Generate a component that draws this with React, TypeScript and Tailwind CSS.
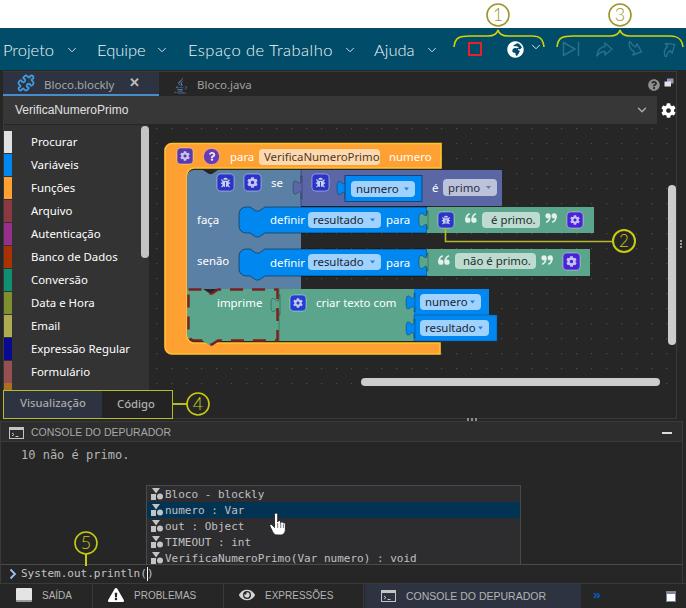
import React from "react";
import { FaBug, FaCog, FaGlobeAfrica, FaEye, FaExclamationTriangle, FaJava, FaQuestionCircle, FaQuestion } from "react-icons/fa";
import { ChevronDown, Puzzle } from "lucide-react";

const cats: [string, string][] = [
  ["Procurar", "#e0e0e0"], ["Variáveis", "#0088f0"], ["Funções", "#ffa033"], ["Arquivo", "#8a3a40"],
  ["Autenticação", "#96308c"], ["Banco de Dados", "#a83200"], ["Conversão", "#109070"], ["Data e Hora", "#7f8f30"],
  ["Email", "#b0aa50"], ["Expressão Regular", "#0a0a90"], ["Formulário", "#965050"],
];

const FS = "11.4";

const tab = (x: number, y: number, h: number, color: string) => (
  <path d={`M${x + 1} ${y + 1} h-1 v${(h - 15) / 2 - 1} c0 10 -8 -8 -8 7.5 s8 -2.5 8 7.5 v${(h - 15) / 2 - 1} h1 z`} fill={color} stroke="#00000066" strokeWidth="0.7" />
);

const Ico = ({ x, y, kind, bg = "#2a35c8", s = 17 }: { x: number; y: number; kind: "bug" | "gear"; bg?: string; s?: number }) => (
  <g>
    <rect x={x} y={y} width={s} height={s} rx="3.5" fill={bg} stroke="#ffffff66" strokeWidth="1" />
    {kind === "bug" && <FaBug x={x + 3.5} y={y + 3.5} size={s - 7} color="#c7d2ee" />}
    {kind === "gear" && <FaCog x={x + 3} y={y + 3} size={s - 6} color="#c9c3f3" />}
  </g>
);

const Field = ({ x, y, w, h = 16, bg, label, arrow, fill = "#1c2530", tx }: { x: number; y: number; w: number; h?: number; bg: string; label: string; arrow?: string; fill?: string; tx?: number }) => (
  <g>
    <rect x={x} y={y} width={w} height={h} rx="4" fill={bg} />
    <text x={tx ?? x + 5} y={y + h / 2 + 4} fontSize={FS} fill={fill}>{label}</text>
    {arrow && <path d={`M${x + w - 11} ${y + h / 2 - 1.5} h5 l-2.5 3 z`} fill={arrow} />}
  </g>
);

const T = ({ x, y, children }: { x: number; y: number; children: React.ReactNode }) => (
  <text x={x} y={y} fontSize={FS} fill="#fff">{children}</text>
);

const Quote = ({ x, y, close }: { x: number; y: number; close?: boolean }) => (
  <g transform={close ? `translate(${x + 12} ${y + 10}) rotate(180)` : `translate(${x} ${y})`} fill="#e4f0ec" stroke="#e4f0ec">
    <circle cx="2.8" cy="7.2" r="2.6" stroke="none" />
    <path d="M0.9 7 C0.9 4 2.4 1.6 4.8 0.8" fill="none" strokeWidth="1.6" />
    <circle cx="9" cy="7.2" r="2.6" stroke="none" />
    <path d="M7.1 7 C7.1 4 8.6 1.6 11 0.8" fill="none" strokeWidth="1.6" />
  </g>
);

const Definir = ({ y, h }: { y: number; h: number }) => (
  <g>
    <path d={`M246 ${y} h4 l6 4 h3 l6 -4 H427 V${y + h} H265 l-6 4 h-3 l-6 -4 h-4 a7 7 0 0 1 -7 -7 V${y + 7} a7 7 0 0 1 7 -7 z`} fill="#0088f0" stroke="#00000070" strokeWidth="1" />
    <T x={270} y={y + h / 2 + 4}>definir</T>
    <Field x={308} y={y + 5} w={73} bg="#9fd2ff" label="resultado" arrow="#2a7fd0" />
    <T x={386} y={y + h / 2 + 4}>para</T>
  </g>
);

const Canvas = () => (
  <svg className="absolute left-0 top-0" width="686" height="608" viewBox="0 0 686 608">
    <defs>
      <pattern id="dots" width="15" height="15" patternUnits="userSpaceOnUse" x="6" y="8">
        <rect width="1.2" height="1.2" fill="#4d4d4d" />
      </pattern>
    </defs>
    <rect x="149" y="125" width="527" height="265" fill="url(#dots)" />

    {/* orange function block */}
    <path d="M172 143.5 H441 V168 H194 a7 7 0 0 0 -7 7 V336 a7 7 0 0 0 7 7 H440 V354 H172 a7 7 0 0 1 -7 -7 V150.5 a7 7 0 0 1 7 -7 z" fill="#ffa033" stroke="#ffc42e" strokeWidth="1.6" />
    <Ico x={177} y={148} kind="gear" bg="#5c3aa8" s={16} />
    <circle cx="211.5" cy="156.5" r="8" fill="#6a3bb0" stroke="#ffffff55" />
    <FaQuestion x={207.5} y={152} size={9} color="#e8e0ff" />
    <T x={230} y={161}>para</T>
    <Field x={259} y={149} w={121} bg="#ffd9ad" label="VerificaNumeroPrimo" fill="#4a3a28" tx={264} />
    <T x={389} y={161}>numero</T>

    {/* if block */}
    <path d="M194 170 H203 l6 4 h3 l6 -4 H301 V289 H187 V177 a7 7 0 0 1 7 -7 z" fill="#5b80a5" />
    <rect x="301" y="170" width="201" height="36" fill="#5b67a5" />
    <path d="M301 170 V206" stroke="#3f4a80" strokeWidth="1" />
    <Ico x={217} y={174} kind="bug" />
    <Ico x={244} y={174} kind="gear" />
    <T x={271} y={187}>se</T>
    {tab(301, 175, 25, "#5b67a5")}
    <Ico x={312} y={174} kind="bug" />
    {tab(345, 176, 24, "#0088f0")}
    <rect x="345" y="175.5" width="77" height="26" fill="#0088f0" stroke="#14457a" strokeWidth="1" />
    <Field x={351} y={181} w={64} bg="#9fd2ff" label="numero" arrow="#2a7fd0" tx={356} />
    <text x={432} y={192} fontSize={FS} fill="#fff">é</text>
    <Field x={443} y={179} w={54} h={17} bg="#bdc2db" label="primo" arrow="#6c75a8" fill="#2a2e44" tx={448} />

    <T x={197} y={224}>faça</T>
    <Definir y={207} h={26} />
    <rect x="427" y="207" width="167" height="26" fill="#5ba58c" />
    {tab(427, 210, 20, "#5ba58c")}
    <Ico x={438} y={212} kind="bug" s={16} />
    <Quote x={465} y={213} />
    <Field x={482} y={212} w={58} bg="#bddbd0" label="é primo." fill="#22302b" tx={491} />
    <Quote x={545} y={213} close />
    <Ico x={567} y={212} kind="gear" bg="#4a22d8" s={16} />

    <T x={197} y={265}>senão</T>
    <Definir y={249} h={27} />
    <rect x="427" y="249" width="163" height="27" fill="#5ba58c" />
    {tab(427, 252, 20, "#5ba58c")}
    <Quote x={438} y={255} />
    <Field x={455} y={253} w={81} bg="#bddbd0" label="não é primo." fill="#22302b" tx={463} />
    <Quote x={541} y={255} close />
    <Ico x={563} y={253} kind="gear" bg="#4a22d8" s={17} />

    {/* print block */}
    <path d="M187 289 H203 l6 4 h3 l6 -4 H279 V341 H218 l-6 4 h-3 l-6 -4 H194 a7 7 0 0 1 -7 -7 z" fill="#5ba58c" />
    <rect x="279" y="289" width="135" height="52" fill="#5ba58c" />
    <path d="M279 289 V341" stroke="#3d7a66" strokeWidth="1" />
    <T x={217} y={307}>imprime</T>
    {tab(279, 294, 22, "#5ba58c")}
    <path d="M188.5 289.5 H203 l6 4 h3 l6 -4 H277.5 V340.5 H218 l-6 4 h-3 l-6 -4 H194 a6 6 0 0 1 -5.5 -6 z" fill="none" stroke="#7a2020" strokeWidth="2.4" strokeDasharray="13 9" />
    <Ico x={290} y={295} kind="gear" bg="#2040d0" s={16} />
    <T x={316} y={307}>criar texto com</T>
    <rect x="414" y="289" width="75" height="26" fill="#0088f0" />
    <rect x="414" y="315" width="83" height="26" fill="#0088f0" stroke="#14457a" strokeWidth="0.5" />
    {tab(414, 292, 21, "#0088f0")}
    {tab(414, 318, 21, "#0088f0")}
    <Field x={420} y={294} w={61} bg="#9fd2ff" label="numero" arrow="#2a7fd0" tx={425} />
    <Field x={420} y={320} w={69} bg="#9fd2ff" label="resultado" arrow="#2a7fd0" tx={425} />

    {/* annotation 2 */}
    <path d="M445.5 228 V241.5 H613" fill="none" stroke="#b6bb2a" strokeWidth="1.6" />
    <circle cx="624" cy="241" r="11" fill="#262626" stroke="#c8cc10" strokeWidth="2" />
    <text x="624" y="247" fontSize="17" fill="#c8cc10" textAnchor="middle" fontWeight="300" className="font-[Lato]">2</text>
  </svg>
);

const Annot = ({ n, cx, cy, color, bg }: { n: string; cx: number; cy: number; color: string; bg: string }) => (
  <svg className="absolute left-0 top-0" width="686" height="608" viewBox="0 0 686 608">
    <circle cx={cx} cy={cy} r="11" fill={bg} stroke={color} strokeWidth="1.6" />
    <text x={cx} y={cy + 6} fontSize="18" fill={color} textAnchor="middle" fontWeight="300" className="font-[Lato]">{n}</text>
  </svg>
);

const Arrow = ({ x, y, t }: { x: number; y: number; t: string }) => (
  <svg className="absolute" style={{ left: x, top: y }} width="18" height="16" viewBox="0 0 18 16">
    <path transform={t} d="M10 2 L17 8 L10 14 V10.5 C6 10.5 4 12 2 15 C2.5 9 6 6 10 5.5 Z" fill="none" stroke="#2b6f8c" strokeWidth="1.4" strokeLinejoin="round" />
  </svg>
);

const ClassIco = () => (
  <svg width="14" height="14" viewBox="0 0 14 14" className="shrink-0">
    <path d="M2 1 H10 L6 6.5 Z" fill="#c4c4c4" />
    <rect x="1" y="7" width="5" height="6" fill="#c4c4c4" />
    <circle cx="10" cy="9.5" r="3" fill="#c4c4c4" />
  </svg>
);

const NavItem = ({ x, chev, wide, children }: { x: number; chev: number; wide?: boolean; children: React.ReactNode }) => (
  <>
    <span className={`absolute top-[10px] whitespace-nowrap font-[Lato] text-[16.5px] font-light leading-[24px] text-[#f0f8fa] ${wide ? "tracking-[0.45px]" : ""}`} style={{ left: x }}>{children}</span>
    <ChevronDown className="absolute top-[15px] text-[#dcebf0]" style={{ left: chev - 7 }} size={14} strokeWidth={1.6} />
  </>
);

const Bottom = ({ x, big, children }: { x: number; big?: boolean; children: React.ReactNode }) => (
  <span className={`absolute top-[6px] whitespace-nowrap font-[Liberation_Sans] leading-[12px] text-[#b4b4b4] ${big ? "text-[10.5px]" : "text-[10px]"}`} style={{ left: x }}>{children}</span>
);

const ConsoleIco = ({ x, y }: { x: number; y: number }) => (
  <svg className="absolute" style={{ left: x, top: y }} width="15" height="12" viewBox="0 0 15 12">
    <rect x="0.5" y="0.5" width="14" height="11" fill="none" stroke="#c4c4c4" />
    <rect x="0.5" y="0.5" width="14" height="2.5" fill="#c4c4c4" />
    <path d="M3 6 l2 1.5 -2 1.5 M6.5 9.5 h3" fill="none" stroke="#c4c4c4" />
  </svg>
);

export default function App() {
  return (
    <div className="relative h-[608px] w-[686px] overflow-hidden bg-[#262626] font-[Noto_Sans]">
      {/* white band + nav */}
      <div className="absolute left-0 top-0 h-[28px] w-full bg-white" />
      <div className="absolute left-0 top-[28px] h-[42px] w-full bg-[#004c69]">
        <NavItem x={3} chev={72}>Projeto</NavItem>
        <NavItem x={97} chev={162}>Equipe</NavItem>
        <NavItem x={188} chev={350} wide>Espaço de Trabalho</NavItem>
        <NavItem x={374} chev={432}>Ajuda</NavItem>
      </div>
      <div className="absolute left-[468px] top-[42px] h-[14px] w-[14px] rounded-[1px] border-2 border-[#e8202a]" />
      <FaGlobeAfrica className="absolute left-[507px] top-[41px] text-white" size={17} />
      <ChevronDown className="absolute left-[529px] top-[40px] text-[#e6f2f6]" size={14} strokeWidth={1.6} />
      <svg className="absolute left-[562px] top-[41px]" width="20" height="16" viewBox="0 0 20 16">
        <path d="M1.5 1.5 L13 8 L1.5 14.5 Z M16.5 1 V15" fill="none" stroke="#2b6f8c" strokeWidth="1.5" />
      </svg>
      <Arrow x={595} y={41} t="" />
      <Arrow x={625} y={41} t="rotate(20 9 8) scale(1 -1) translate(0 -16)" />
      <Arrow x={659} y={41} t="rotate(-35 9 8)" />

      {/* top annotations */}
      <svg className="absolute left-0 top-0" width="686" height="70" viewBox="0 0 686 70">
        <path d="M454 47 C455 37 460 36 470 36 H488 C494 36 497 34 498 30 C499 34 502 36 508 36 H532 C540 36 543 39 544 47" fill="none" stroke="#d2d20a" strokeWidth="1.6" />
        <path d="M557 47 C558 37 563 36 573 36 H610 C616 36 619 34 620 30 C621 34 624 36 630 36 H670 C678 36 682 39 683 47" fill="none" stroke="#d2d20a" strokeWidth="1.6" />
      </svg>
      <Annot n="1" cx={498} cy={15} color="#9c9628" bg="#ffffff" />
      <Annot n="3" cx={620} cy={15} color="#9c9628" bg="#ffffff" />

      {/* editor panel */}
      <div className="absolute left-[3px] top-[71px] h-[348px] w-[674px] border border-[#3a3a3a] bg-[#262626]" />
      <div className="absolute left-[3px] top-[72px] flex h-[24px] w-[156px] items-center border-b-2 border-[#4a8cc8] bg-[#2d3340]">
        <Puzzle className="absolute left-[14px] top-[2px] text-[#3f9be0]" size={18} strokeWidth={2.4} />
        <span className="absolute left-[41px] top-[4px] whitespace-nowrap text-[11.5px] leading-[17px] text-[#a6a6a6]">Bloco.blockly</span>
        <span className="absolute left-[126px] top-[2px] text-[13px] font-bold leading-[17px] text-[#bdbdbd]">✕</span>
      </div>
      <FaJava className="absolute left-[172px] top-[77px] text-[#5b8fc0]" size={17} />
      <span className="absolute left-[197px] top-[76px] whitespace-nowrap text-[11.5px] leading-[17px] text-[#a0a0a0]">Bloco.java</span>
      <FaQuestionCircle className="absolute left-[648px] top-[79px] text-[#8f8f8f]" size={12} />
      <svg className="absolute left-[664px] top-[78px]" width="10" height="10" viewBox="0 0 10 10">
        <rect x="3" y="0.5" width="6.5" height="5" fill="#8d9ab8" />
        <rect x="0.5" y="3.5" width="6.5" height="5" fill="#e4e4e4" />
      </svg>
      <div className="absolute left-[3px] top-[96px] h-[28px] w-[654px] bg-[#373737]">
        <span className="absolute left-[12px] top-[6px] whitespace-nowrap font-[Liberation_Sans] text-[12px] leading-[17px] text-[#e0e0e0]">VerificaNumeroPrimo</span>
        <ChevronDown className="absolute left-[632px] top-[7px] text-[#a8a8a8]" size={14} strokeWidth={2.5} />
      </div>
      <FaCog className="absolute left-[661px] top-[103px] text-white" size={15} />

      {/* toolbox */}
      <div className="absolute left-[4px] top-[125px] h-[265px] w-[145px] overflow-hidden bg-[#333333]">
        {cats.map(([name, color], i) => (
          <div key={name} className="absolute left-0 flex h-[23px] w-full items-center" style={{ top: 5 + i * 23 }}>
            <div className="h-[22px] w-[8px]" style={{ backgroundColor: color }} />
            <span className="ml-[19px] whitespace-nowrap text-[11.4px] leading-[16px] text-white">{name}</span>
          </div>
        ))}
        <div className="absolute left-0 top-[258px] h-[7px] w-[8px] bg-[#a87020]" />
        <div className="absolute left-[137px] top-[1px] h-[132px] w-[8px] rounded-[4px] bg-[#c4c4c4]" />
      </div>

      <Canvas />

      {/* scrollbars */}
      <div className="absolute left-[668px] top-[185px] h-[160px] w-[8px] rounded-[4px] bg-[#cccccc]" />
      <div className="absolute left-[361px] top-[378px] h-[8px] w-[299px] rounded-[4px] bg-[#cccccc]" />
      <div className="absolute left-[680px] top-[240px] flex flex-col gap-[1px]">
        <i className="h-[2px] w-[2px] bg-[#9a9a9a]" /><i className="h-[2px] w-[2px] bg-[#9a9a9a]" /><i className="h-[2px] w-[2px] bg-[#9a9a9a]" />
      </div>

      {/* view tabs */}
      <div className="absolute left-[3px] top-[390px] flex h-[29px] w-[170px] border border-[#b6bb2a] bg-[#232323]">
        <div className="flex h-full w-[98px] items-center justify-center bg-[#2d3340] pb-[3px] text-[11.3px] font-medium text-[#a8a8a8]">Visualização</div>
        <div className="flex h-full flex-1 items-center justify-center pr-[2px] text-[11.3px] font-medium text-[#b0b0b0]">Código</div>
      </div>
      <div className="absolute left-[173px] top-[403px] h-[2px] w-[14px] bg-[#b6bb2a]" />
      <Annot n="4" cx={198} cy={404} color="#c8cc10" bg="#262626" />

      {/* splitter */}
      <div className="absolute left-[467px] top-[418px] flex gap-[2px]">
        <i className="h-[3px] w-[2px] bg-[#8a8a8a]" /><i className="h-[3px] w-[2px] bg-[#8a8a8a]" /><i className="h-[3px] w-[2px] bg-[#8a8a8a]" />
      </div>

      {/* console */}
      <div className="absolute left-0 top-[421px] h-[187px] w-[683px] border border-[#3a3a3a] bg-[#262626]" />
      <div className="absolute left-[1px] top-[422px] h-[20px] w-[681px] border-b border-[#3a3a3a] bg-[#2d2d2d]">
        <span className="absolute left-[30px] top-[4px] whitespace-nowrap font-[Liberation_Sans] text-[10.5px] leading-[12px] text-[#a8a8a8]">CONSOLE DO DEPURADOR</span>
        <div className="absolute left-[661px] top-[10px] h-[2px] w-[10px] bg-[#dcdcdc]" />
      </div>
      <ConsoleIco x={9} y={427} />
      <span className="absolute left-[21px] top-[447px] whitespace-pre font-[DejaVu_Sans_Mono] text-[12px] leading-[16px] text-[#b4b4b4]">10 não é primo.</span>

      {/* autocomplete */}
      <div className="absolute left-[146px] top-[485px] h-[80px] w-[375px] border border-[#4a4a4a] bg-[#2d2d30] font-[DejaVu_Sans_Mono] text-[11px] leading-[16px] text-[#c0c0c0]">
        {["Bloco - blockly", "numero : Var", "out : Object", "TIMEOUT : int", "VerificaNumeroPrimo(Var numero) : void"].map((s, i) => (
          <div key={s} className={`flex h-[16px] items-center gap-[1px] whitespace-pre pl-[3px] ${i === 1 ? "bg-[#033353]" : ""}`}>
            <ClassIco />
            <span className="translate-y-[1px]">{s}</span>
          </div>
        ))}
      </div>
      <svg className="absolute left-[269px] top-[512px]" width="17" height="24" viewBox="0 0 17 24">
        <path d="M5.5 2.5 a1.6 1.6 0 0 1 3.2 0 V10 a1.5 1.5 0 0 1 3 0 V10.8 a1.4 1.4 0 0 1 2.7 0.2 a1.3 1.3 0 0 1 2 1 V17 c0 3.5 -1.8 6 -4.5 6 H8 c-2.5 0 -3.5 -1.5 -4.5 -3.5 L1 14.5 c-0.7 -1.6 1.2 -2.8 2.3 -1.5 L5.5 15.5 Z" fill="#ffffff" stroke="#222222" strokeWidth="0.9" />
        <path d="M8.7 11 V16 M11.7 11 V16 M14.4 12 V16" stroke="#444444" strokeWidth="0.7" fill="none" />
      </svg>

      {/* input */}
      <div className="absolute left-[1px] top-[564px] h-[1px] w-[681px] bg-[#4a4a4a]" />
      <svg className="absolute left-[9px] top-[568px]" width="8" height="12" viewBox="0 0 8 12">
        <path d="M1.5 1.5 L6 6 L1.5 10.5" fill="none" stroke="#9ec4e8" strokeWidth="1.8" />
      </svg>
      <span className="absolute left-[21px] top-[566px] whitespace-pre font-[DejaVu_Sans_Mono] text-[11px] leading-[16px] text-[#c4c4c4]">System.out.println(</span>
      <div className="absolute left-[147px] top-[567px] h-[14px] w-[1px] bg-white" />
      <span className="absolute left-[147px] top-[566px] font-[DejaVu_Sans_Mono] text-[11px] leading-[16px] text-[#c4c4c4]">)</span>
      <div className="absolute left-[85px] top-[554px] h-[12px] w-[2px] bg-[#c8cc10]" />
      <Annot n="5" cx={86} cy={543} color="#c8cc10" bg="#262626" />

      {/* bottom bar */}
      <div className="absolute left-0 top-[583px] h-[25px] w-[686px] border-t border-[#3a3a3a] bg-[#262626]">
        <div className="absolute left-[92px] top-0 h-full w-px bg-[#3a3a3a]" />
        <div className="absolute left-[223px] top-0 h-full w-px bg-[#3a3a3a]" />
        <div className="absolute left-[363px] top-0 h-full w-px bg-[#3a3a3a]" />
        <div className="absolute left-[365px] top-0 h-full w-[216px] bg-[#2d3340]" />
        <div className="absolute left-[16px] top-[4px] h-[14px] w-[16px] rounded-[1px] border-b-2 border-[#9a9a9a] bg-[#e4e4e4]" />
        <Bottom x={42}>SAÍDA</Bottom>
        <FaExclamationTriangle className="absolute left-[108px] top-[3px] text-white" size={16} />
        <Bottom x={134}>PROBLEMAS</Bottom>
        <FaEye className="absolute left-[239px] top-[3px] text-[#d4d4d4]" size={16} />
        <Bottom x={265}>EXPRESSÕES</Bottom>
        <Bottom x={406} big>CONSOLE DO DEPURADOR</Bottom>
        <span className="absolute left-[593px] top-[3px] text-[13px] font-bold leading-[15px] text-[#0a58b8]">»</span>
        <div className="absolute left-[666px] top-[7px] h-[11px] w-[10px] border border-[#7c84a0] border-t-[3px] bg-white" />
      </div>
      <ConsoleIco x={381} y={590} />
    </div>
  );
}
